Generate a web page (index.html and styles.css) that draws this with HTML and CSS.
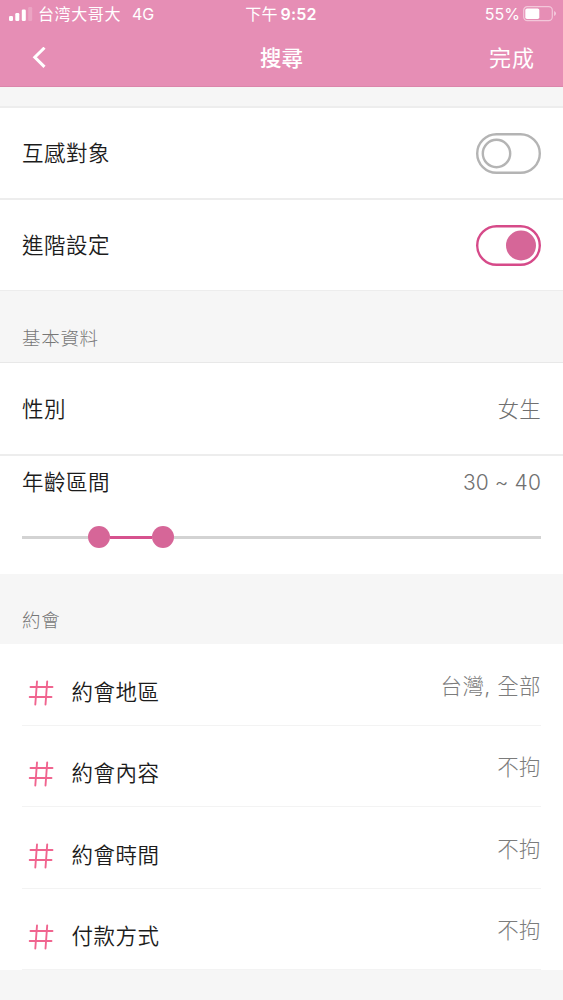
FILE: index.html
```html
<!DOCTYPE html>
<html lang="zh-Hant">
<head>
<meta charset="utf-8">
<title>搜尋</title>
<link rel="stylesheet" href="styles.css">
</head>
<body>
<header class="header">
  <div class="status">
    <div class="status-left">
      <svg class="signal" width="24" height="14" viewBox="0 0 24 14" fill="#fff"><rect x="0" y="9" width="4" height="5" rx="1.2"/><rect x="6.3" y="6" width="4" height="8" rx="1.2"/><rect x="12.8" y="2.5" width="4" height="11.5" rx="1.2"/><rect x="19.2" y="0" width="4" height="14" rx="1.2" opacity=".2"/></svg>
      <span class="carrier" lang="zh-Hans">台湾大哥大</span><span class="network">4G</span>
    </div>
    <div class="clock"><span class="ampm">下午</span><span>9:52</span></div>
    <div class="status-right">
      <span>55%</span>
      <svg width="34" height="16" viewBox="0 0 34 16"><rect x=".7" y=".7" width="28.6" height="14" rx="3.6" fill="none" stroke="#fff" stroke-opacity=".5" stroke-width="1.2"/><rect x="2.3" y="2.4" width="14" height="10.5" rx="1.7" fill="#fff"/><path d="M31.2 5v5q1.700-.8 1.700-2.500t-1.700-2.500z" fill="#fff" opacity=".6"/></svg>
    </div>
  </div>
  <nav class="nav">
    <svg class="back" width="14" height="22" viewBox="0 0 14 22"><path d="M12.500 .7 2.800 10.300 12.500 19.900" fill="none" stroke="#fff" stroke-width="3"/></svg>
    <h1 class="title">搜尋</h1>
    <span class="done">完成</span>
  </nav>
</header>
<main>
  <div class="gap"></div>
  <div class="row first"><span class="label">互感對象</span><span class="toggle"><svg width="65" height="41" viewBox="0 0 65 41"><rect x="1.200" y="1.200" width="62.600" height="38.600" rx="19.300"/><circle cx="20.500" cy="20.500" r="13.700"/></svg></span></div>
  <div class="row"><span class="label">進階設定</span><span class="toggle on"><svg width="65" height="41" viewBox="0 0 65 41"><rect x="1.200" y="1.200" width="62.600" height="38.600" rx="19.300"/><circle cx="45" cy="20.500" r="15"/></svg></span></div>
  <h2 class="section basic">基本資料</h2>
  <div class="row gender"><span class="label">性別</span><span class="value">女生</span></div>
  <div class="age">
    <div class="age-head"><span class="label">年齡區間</span><span class="value number">30 ~ 40</span></div>
    <div class="slider"><span class="rail lead"></span><span class="dot"></span><span class="rail active"></span><span class="dot"></span><span class="rail rest"></span></div>
  </div>
  <h2 class="section dating">約會</h2>
  <ul class="list">
    <li class="item"><svg class="hash" width="26" height="26" viewBox="0 0 26 26"><path d="M9 1.500 7.300 24.500M19.200 1.500 17.500 24.500M2.500 7H24.500M1.700 17H23.500"/></svg><span class="label">約會地區</span><span class="value">台灣, 全部</span></li>
    <li class="item"><svg class="hash" width="26" height="26" viewBox="0 0 26 26"><path d="M9 1.500 7.300 24.500M19.200 1.500 17.500 24.500M2.500 7H24.500M1.700 17H23.500"/></svg><span class="label">約會內容</span><span class="value">不拘</span></li>
    <li class="item"><svg class="hash" width="26" height="26" viewBox="0 0 26 26"><path d="M9 1.500 7.300 24.500M19.200 1.500 17.500 24.500M2.500 7H24.500M1.700 17H23.500"/></svg><span class="label">約會時間</span><span class="value">不拘</span></li>
    <li class="item"><svg class="hash" width="26" height="26" viewBox="0 0 26 26"><path d="M9 1.500 7.300 24.500M19.200 1.500 17.500 24.500M2.500 7H24.500M1.700 17H23.500"/></svg><span class="label">付款方式</span><span class="value">不拘</span></li>
  </ul>
</main>
</body>
</html>
```
FILE: styles.css
```css
* { box-sizing: border-box; }
body {
  margin: 0;
  height: 1000px;
  overflow: hidden;
  background: #f6f6f6;
  color: #1c1c1c;
  font-family: Inter, "Noto Sans CJK TC", sans-serif;
  font-weight: 350;
}
h1, h2, ul { margin: 0; padding: 0; font-weight: 350; list-style: none; }
svg { display: block; flex: none; }

.header { height: 87px; background: #e68eb5; color: #fff; border-bottom: 1px solid #db86ab; }
.status {
  display: grid;
  grid-template-columns: 1fr auto 1fr;
  align-items: center;
  height: 28px;
  padding: 0 7px 0 9px;
  font-size: 16px;
  line-height: 28px;
  font-weight: 400;
}
.status-left, .status-right, .clock { display: flex; align-items: center; white-space: nowrap; }
.status-left { font-family: Inter, "Noto Sans CJK SC", sans-serif; }
.carrier { margin-left: 5px; letter-spacing: .6px; }
.network { margin-left: 11px; }
.clock { font-weight: 600; gap: 3px; letter-spacing: .2px; margin-right: 3px; }
.ampm { font-weight: 400; }
.status-right { justify-content: flex-end; gap: 3px; margin-right: -1px; }

.nav {
  display: grid;
  grid-template-columns: 1fr auto 1fr;
  align-items: center;
  height: 58px;
  padding: 0 28px 0 32px;
  line-height: 60px;
}
.title { font-size: 21.500px; font-weight: 500; margin-right: 4px; }
.done { font-size: 22px; font-weight: 400; letter-spacing: 1px; justify-self: end; }

.gap { height: 19px; }
.row {
  display: flex;
  align-items: center;
  justify-content: space-between;
  height: 92px;
  padding: 0 22px;
  background: #fff;
  border-bottom: 2px solid #ededed;
}
.row.first { height: 94px; border-top: 2px solid #ededed; }
.row.first + .row { height: 91px; border-bottom-width: 1px; }
.label { font-size: 21.500px; line-height: 30px; letter-spacing: .5px; }
.value { font-size: 21.500px; line-height: 30px; letter-spacing: .2px; color: #707070; font-weight: 300; }
.number { font-size: 21px; letter-spacing: .1px; font-weight: 350; line-height: 31px; }

.toggle { fill: none; stroke: #b4b4b4; stroke-width: 2.400; }
.on { stroke: #d64a89; }
.on circle { fill: #d66698; stroke: none; }

.section { padding-left: 22px; color: #777; font-size: 18.500px; letter-spacing: .7px; font-weight: 300; }
.basic { height: 71px; padding-top: 33px; line-height: 28px; }
.dating { height: 70px; padding-top: 32px; line-height: 28px; }
.row.gender { height: 94px; border-top: 1px solid #e8e8e8; padding-top: 1px; }

.age { height: 118px; padding: 11px 22px 0; background: #fff; }
.age-head { display: flex; justify-content: space-between; height: 30px; }
.slider { display: flex; align-items: center; height: 22px; margin-top: 29px; }
.rail { height: 3px; background: #d3d3d3; }
.lead { width: 66px; }
.active { width: 42px; background: #d6528e; }
.rest { flex: 1; }
.dot { width: 22px; height: 22px; border-radius: 50%; background: #d66698; }

.list { padding: 0 22px; background: #fff; }
.item { display: flex; height: 81.500px; padding-top: 32.500px; border-bottom: 1px solid #f3f3f3; }
.hash { margin: 3px 17.500px 0 6px; fill: none; stroke: #f0648f; stroke-width: 1.900; stroke-linecap: round; }
.item .value { margin: -6px 0 0 auto; color: #7c7c7c; letter-spacing: .4px; }
```
